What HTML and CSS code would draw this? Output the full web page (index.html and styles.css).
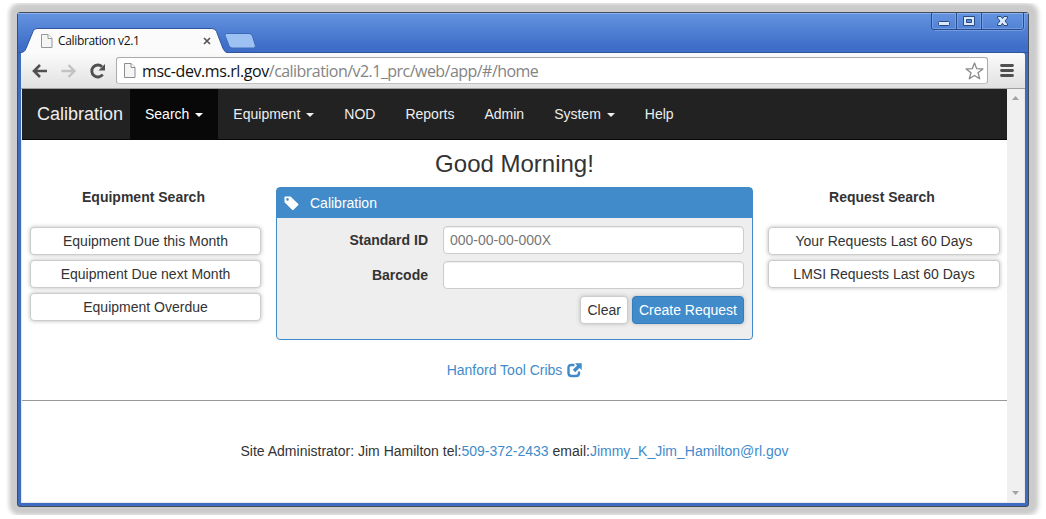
FILE: index.html
```html
<!DOCTYPE html>
<html lang="en">
<head>
<meta charset="utf-8">
<title>Calibration v2.1</title>
<link rel="stylesheet" href="styles.css">
</head>
<body>
<div class="window">
  <div class="titlebar">
    <div class="tab">
      <svg class="tab-shape" width="206" height="25" viewBox="0 0 206 25"><path d="M0 25V24.500C3 24 4 23 5 20.500L12 3.500Q13 .5 16 .5H191Q194 .5 195.500 3.500L202 20.500Q204 24.500 206 24.500V25Z" fill="#fbfbfb"/><path d="M0 24.500C3 24 4 23 5 20.500L12 3.500Q13 .5 16 .5H191Q194 .5 195.500 3.500L202 20.500Q204 24.500 206 24.500" fill="none" stroke="#2f559c"/></svg>
      <svg class="page-icon" width="12" height="14" viewBox="0 0 12 14"><path d="M.5 .5H7L11 4.500V13.500H.5Z" fill="#f5f5f5" stroke="#969696"/><path d="M7 .5V4.500H11" fill="#fff" stroke="#969696"/></svg>
      <span class="tab-title">Calibration v2.1</span>
      <svg class="tab-close" width="8" height="8" viewBox="0 0 8 8"><path d="M1 1L7 7M7 1L1 7" stroke="#555" stroke-width="1.700"/></svg>
    </div>
    <svg class="new-tab" width="32" height="16" viewBox="0 0 32 16"><path d="M2.500 .5H25Q27.500 .5 28.500 3L31.300 12.500Q31.700 15 29.500 15H8Q6 15 5 12.500L1 2.500Q.5 .5 2.500 .5Z" fill="#9dc1f2" stroke="#3d6ab8"/></svg>
    <svg class="controls" width="94" height="18" viewBox="0 0 94 18"><path d="M.5 0V14Q.5 16.500 3 16.500H90Q92.500 16.500 92.500 14V0M25.500 0V16M50.500 0V16" fill="none" stroke="#294b86"/><path d="M1.500 0V14Q1.500 15.500 3 15.500H24.500V0M26.500 0V15.500H49.500V0M51.500 0V15.500H90Q91.500 15.500 91.500 14V0M93.500 0V15Q93 17.500 90 17.500H4" fill="none" stroke="#86adf0" opacity=".6"/><rect x="7.500" y="8.500" width="11" height="4" rx="1" fill="#dce8fb" stroke="#2b4a80"/><path d="M32.500 3.500H43.500V12.500H32.500ZM35.500 6.500V9.500H40.500V6.500Z" fill="#dce8fb" fill-rule="evenodd" stroke="#2b4a80"/><path d="M66.500 3.500H70L71.500 5.700L73 3.500H76.500V5L74 8L76.500 11V12.500H73L71.500 10.300L70 12.500H66.500V11L69 8L66.500 5Z" fill="#dce8fb" stroke="#2b4a80"/></svg>
  </div>
  <div class="toolbar">
    <svg class="nav-icon" width="16" height="14" viewBox="0 0 16 14"><path d="M15 7H2.500M8 1L2 7L8 13" fill="none" stroke="#505050" stroke-width="2.600"/></svg>
    <svg class="nav-icon" width="16" height="14" viewBox="0 0 16 14"><path d="M.5 7H13M7.500 1L13.500 7L7.500 13" fill="none" stroke="#c2c2c2" stroke-width="2.300"/></svg>
    <svg class="nav-icon" width="16" height="16" viewBox="0 0 16 16"><path d="M12 3.700A6 6 0 1 0 12.700 11.500" fill="none" stroke="#505050" stroke-width="2.900"/><path d="M15 1V7.500H8.500Z" fill="#505050"/></svg>
    <div class="omnibox">
      <svg width="12" height="15" viewBox="0 0 12 15"><path d="M.5 .5H7L11 4.500V14.500H.5Z" fill="#f5f5f5" stroke="#8d8d8d"/><path d="M7 .5V4.500H11" fill="#fff" stroke="#8d8d8d"/></svg>
      <span class="url"><span class="host">msc-dev.ms.rl.gov</span>/calibration/v2.1_prc/web/app/#/home</span>
      <svg class="star" width="19" height="18" viewBox="0 0 19 18"><path d="M9.500 1L11.700 6.700L17.900 7L13 10.800L14.700 16.800L9.500 13.500L4.300 16.800L6 10.800L1.100 7L7.300 6.700Z" fill="#fff" stroke="#8a8a8a" stroke-width="1.300" stroke-linejoin="round"/></svg>
    </div>
    <svg class="menu" width="14" height="13" viewBox="0 0 14 13"><path d="M1.500 1.500H12.500M1.500 6.500H12.500M1.500 11.500H12.500" stroke="#505050" stroke-width="2.800" stroke-linecap="round"/></svg>
  </div>
  <div class="viewport">
    <div class="page">
      <nav class="navbar">
        <a class="brand">Calibration</a>
        <a class="nav-item active">Search<i class="caret"></i></a>
        <a class="nav-item">Equipment<i class="caret"></i></a>
        <a class="nav-item">NOD</a>
        <a class="nav-item">Reports</a>
        <a class="nav-item">Admin</a>
        <a class="nav-item">System<i class="caret"></i></a>
        <a class="nav-item">Help</a>
      </nav>
      <h1 class="greeting">Good Morning!</h1>
      <main class="columns">
        <section class="side">
          <h2 class="side-title">Equipment Search</h2>
          <button class="btn">Equipment Due this Month</button>
          <button class="btn">Equipment Due next Month</button>
          <button class="btn">Equipment Overdue</button>
        </section>
        <section class="panel">
          <div class="panel-heading">
            <svg width="15" height="15" viewBox="0 0 15 15"><path fill-rule="evenodd" d="M.5 1.200Q.5 .5 1.200 .5H6.500L14.300 8Q14.700 8.500 14.300 9L9.300 13.900Q8.800 14.300 8.300 13.900L.5 6.300ZM3.500 2.100A1.300 1.300 0 1 0 3.500 4.700A1.300 1.300 0 1 0 3.500 2.100Z" fill="#fff"/></svg>
            <span>Calibration</span>
          </div>
          <div class="panel-body">
            <label class="label" for="sid">Standard ID</label>
            <input class="input" id="sid" placeholder="000-00-00-000X">
            <label class="label" for="bar">Barcode</label>
            <input class="input" id="bar">
            <div class="actions">
              <button class="btn">Clear</button>
              <button class="btn primary">Create Request</button>
            </div>
          </div>
        </section>
        <section class="side">
          <h2 class="side-title">Request Search</h2>
          <button class="btn">Your Requests Last 60 Days</button>
          <button class="btn">LMSI Requests Last 60 Days</button>
        </section>
      </main>
      <div class="cribs"><a class="link">Hanford Tool Cribs</a>
        <svg width="15" height="15" viewBox="0 0 15 15"><path d="M7.500 2H4.500Q1.500 2 1.500 5V10Q1.500 13 4.500 13H9Q12 13 12 10V8.500" fill="none" stroke="#428bca" stroke-width="2.400"/><path d="M8 .3H14.700V7L12.500 4.900L8.200 9.200L5.800 6.800L10.100 2.500Z" fill="#428bca" stroke="#fff" stroke-width="1.200" paint-order="stroke"/></svg>
      </div>
      <footer class="footer">Site Administrator: Jim Hamilton tel:<a class="link">509-372-2433</a> email:<a class="link">Jimmy_K_Jim_Hamilton@rl.gov</a></footer>
    </div>
    <div class="scrollbar">
      <svg width="7" height="4" viewBox="0 0 7 4"><path d="M0 4L3.500 0L7 4Z" fill="#a3a3a3"/></svg>
      <svg width="7" height="4" viewBox="0 0 7 4"><path d="M0 0L3.500 4L7 0Z" fill="#a3a3a3"/></svg>
    </div>
  </div>
</div>
</body>
</html>
```
FILE: styles.css
```css
* { box-sizing: border-box; }

body {
  margin: 0;
  padding: 12px 17px;
  height: 519px;
  overflow: hidden;
  background: #fff;
  color: #333;
  font: 14px/20px "Liberation Sans", Arial, sans-serif;
}

svg { display: block; flex: none; }

.window {
  display: flex;
  flex-direction: column;
  width: 1012px;
  height: 495px;
  padding: 0 3px 3px;
  border: 1px solid #444c5c;
  border-radius: 3px;
  background: #3d6cc0;
  box-shadow: 1px 0 5px 8px #cbcbcb, 0 -1px 5px 6px #cbcbcb;
  clip-path: inset(-9px -13px -8px -11px);
}

.titlebar {
  display: flex;
  height: 40px;
  margin: 0 -3px;
  padding: 0 3px;
  background: linear-gradient(#6393df, #3f6ec8 85%);
  border-top: 1px solid #8bb2ef;
  border-bottom: 1px solid #2f559c;
}

.tab {
  position: relative;
  display: flex;
  align-items: center;
  width: 206px;
  height: 25px;
  margin-top: 14px;
  padding: 0 16px 0 20px;
}

.tab-shape { position: absolute; left: 0; top: 0; }
.page-icon, .tab-title, .tab-close { position: relative; }

.tab-title {
  margin-left: 5px;
  color: #111;
  font: 12px/18px "Open Sans", "Noto Sans", sans-serif;
  letter-spacing: -.35px;
  white-space: nowrap;
}

.tab-close { margin-left: auto; }
.new-tab { margin: 19px 0 0 -3px; }
.controls { margin-left: auto; margin-top: -1px; }

.toolbar {
  display: flex;
  align-items: center;
  flex: none;
  height: 36px;
  padding: 0 11px 0 11px;
  background: linear-gradient(#fbfbfb, #e1e1e1);
  border-bottom: 1px solid #a0a0a0;
  border-radius: 0 2px 0 0;
}

.nav-icon { margin-right: 13px; }

.omnibox {
  display: flex;
  align-items: center;
  flex: 1;
  height: 27px;
  margin-left: -3px;
  padding: 0 3px 0 7px;
  background: #fff;
  border: 1px solid #ababab;
  border-bottom-color: #c2c2c2;
  border-radius: 3px;
}

.url {
  margin-left: 6px;
  color: #848484;
  font: 16px/22px "Open Sans", "Noto Sans", sans-serif;
  letter-spacing: -.54px;
  white-space: nowrap;
}

.host { color: #111; letter-spacing: -.42px; }
.star { margin-left: auto; }
.menu { margin: 0 0 0 12px; }

.viewport {
  display: flex;
  flex: 1;
  min-height: 0;
  border: solid #e8e8e8;
  border-width: 0 1px 1px;
  background: #fff;
}

.page { width: 985px; }

.scrollbar {
  display: flex;
  flex-direction: column;
  justify-content: space-between;
  align-items: center;
  flex: 1;
  padding: 7px 0 7px;
  background: #f0f0f0;
}

.navbar {
  display: flex;
  height: 51px;
  background: #222;
  border-bottom: 1px solid #080808;
}

.brand {
  width: 108px;
  padding: 15px 0 0 15px;
  color: #eee;
  font-size: 18px;
}

.nav-item {
  display: flex;
  align-items: center;
  padding: 0 15px;
  color: #eee;
}

.active { background: #080808; color: #fff; }

.caret {
  margin-left: 6px;
  margin-top: 1px;
  border: 4px solid transparent;
  border-top-color: currentColor;
  border-bottom: 0;
}

.greeting {
  margin: 10px 0 9px;
  font-size: 24px;
  font-weight: 400;
  line-height: 28px;
  text-align: center;
}

.columns {
  display: grid;
  grid-template-columns: 231px 477px 232px;
  column-gap: 15px;
  align-items: start;
  padding-left: 8px;
}

.side {
  display: flex;
  flex-direction: column;
  gap: 5px;
}

.side-title {
  margin: 0 4px 15px 0;
  font-size: 14px;
  line-height: 20px;
  text-align: center;
}

.btn {
  height: 28px;
  padding: 0 6px;
  background: #fff;
  border: 1px solid #ccc;
  border-radius: 4px;
  box-shadow: 0 0 4px #bbb;
  color: #333;
  font: inherit;
}

.panel {
  height: 153px;
  background: #eee;
  border: 1px solid #428bca;
  border-radius: 4px;
}

.panel-heading {
  display: flex;
  align-items: center;
  gap: 11px;
  height: 30px;
  padding-left: 7px;
  background: #428bca;
  color: #fff;
}

.panel-body {
  display: grid;
  grid-template-columns: 151px 301px;
  column-gap: 15px;
  row-gap: 7px;
  padding-top: 8px;
}

.label { font-weight: 700; line-height: 28px; text-align: right; }

.input {
  height: 28px;
  width: 100%;
  padding: 0 6px;
  border: 1px solid #ccc;
  border-radius: 4px;
  background: #fff;
  box-shadow: inset 0 1px 1px rgba(0, 0, 0, .075);
  color: #555;
  font: inherit;
}

.input::placeholder { color: #777; }

.actions {
  grid-column: 2;
  display: flex;
  justify-content: flex-end;
  gap: 4px;
}

.primary { background: #428bca; border-color: #357ebd; color: #fff; }
.link { color: #428bca; }

.cribs {
  display: flex;
  justify-content: center;
  align-items: center;
  gap: 5px;
  height: 60px;
}

.footer {
  height: 101px;
  padding-top: 40px;
  border-top: 1px solid #999;
  text-align: center;
}
```
